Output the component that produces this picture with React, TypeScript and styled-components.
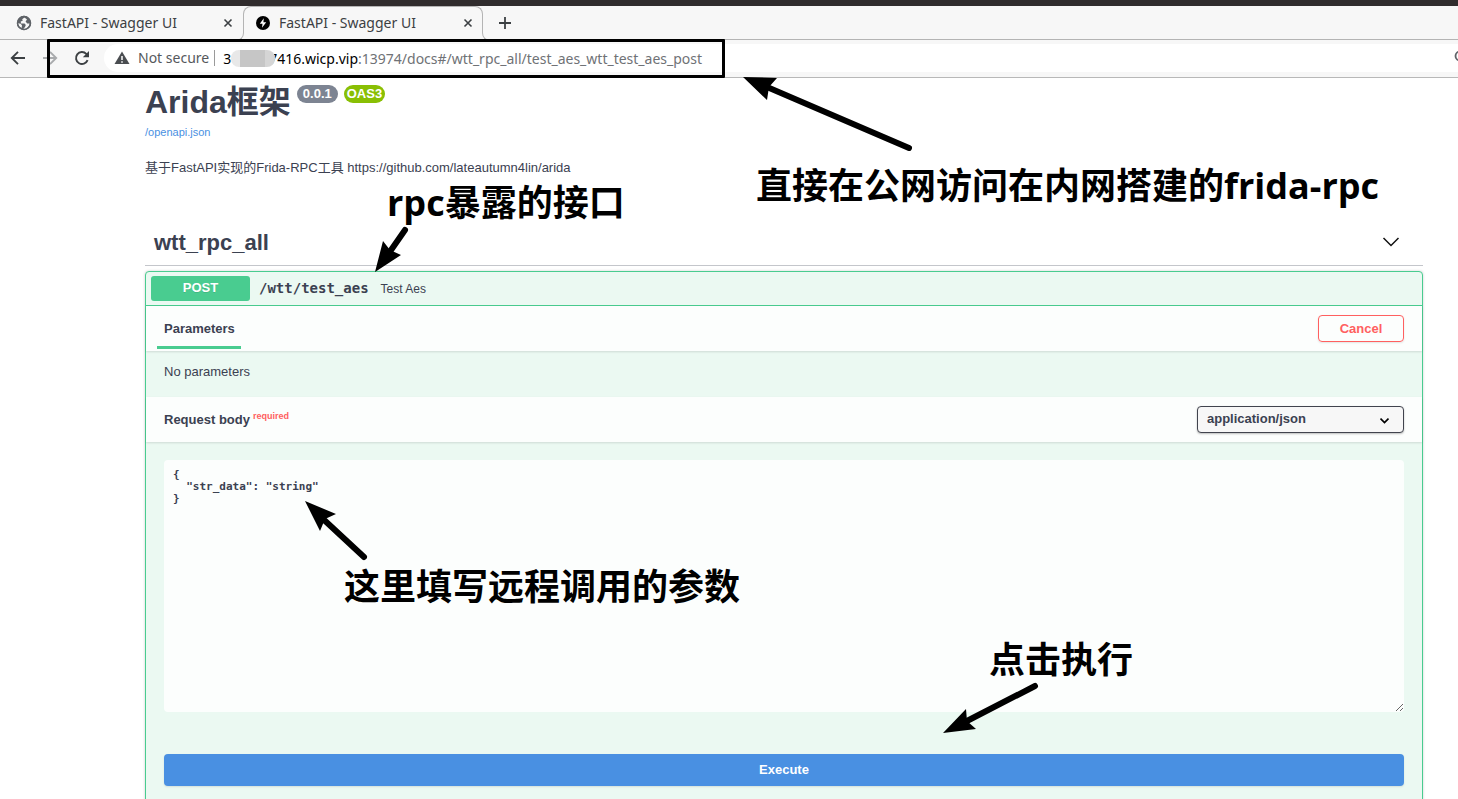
import React from 'react';
import styled, { createGlobalStyle } from 'styled-components';

const Global = createGlobalStyle`
  * { box-sizing: border-box; }
  body {
    margin: 0;
    background: #fff;
    color: #3b4151;
    font-family: "Liberation Sans", "Noto Sans CJK SC", sans-serif;
    overflow: hidden;
  }
  button, select, textarea { font: inherit; color: inherit; }
`;

const Screen = styled.div`
  position: relative;
  height: 100vh;
  overflow: hidden;
`;

/* Browser chrome */
const Chrome = styled.header`
  font-family: "Noto Sans", sans-serif;
  font-size: 14px;
  color: #3c4043;
  background: #f7f7f7;
`;

const TitleStrip = styled.div`
  height: 6px;
  background: #302c2d;
`;

const TabBar = styled.nav`
  display: flex;
  height: 34px;
  border-bottom: 1px solid #b4b4b4;
`;

const Tab = styled.div<{ $active?: boolean }>`
  position: relative;
  display: flex;
  align-items: center;
  gap: 8px;
  width: ${p => (p.$active ? 240 : 243)}px;
  height: 33px;
  padding: 0 7px 0 ${p => (p.$active ? 12 : 16)}px;
`;

/* Rounded top of the selected tab, with its two feet curving outwards */
const TabOutline = styled.span`
  position: absolute;
  inset: 0 0 8px;
  border: 1px solid #b4b4b4;
  border-bottom: 0;
  border-radius: 8px 8px 0 0;

  &::before, &::after {
    content: "";
    position: absolute;
    top: 100%;
    width: 9px;
    height: 9px;
    border: 0 solid #b4b4b4;
    border-bottom-width: 1px;
  }
  &::before {
    right: 100%;
    margin-right: -1px;
    right: calc(100% + 1px);
    border-right-width: 1px;
    border-bottom-right-radius: 8px;
  }
  &::after {
    left: 100%;
    border-left-width: 1px;
    border-bottom-left-radius: 8px;
  }
`;

const TabLabel = styled.span`
  flex: 1;
  white-space: nowrap;
`;

const IconButton = styled.button`
  display: grid;
  place-items: center;
  width: 16px;
  height: 16px;
  padding: 0;
  border: 0;
  background: none;
`;

const NewTab = styled(IconButton)`
  align-self: center;
  margin-left: 14px;
`;

const Toolbar = styled.div`
  display: flex;
  align-items: center;
  gap: 16px;
  height: 38px;
  padding: 0 0 1px 10px;
  border-bottom: 1px solid #b8b8b8;
`;

const Address = styled.div`
  display: flex;
  flex: 1;
  align-items: center;
  height: 28px;
  margin: 0 -20px 0 -2px;
  padding: 0 8px 0 10px;
  border-radius: 14px;
  background: #fff;
`;

const Warning = styled.span`
  display: flex;
  align-items: center;
  gap: 8px;
  padding-right: 5px;
  border-right: 1px solid #9a9a9a;
  line-height: 16px;
  color: #55585c;
`;

const Url = styled.span`
  display: flex;
  flex: 1;
  align-items: center;
  padding-left: 8px;
  color: #6f7276;
  b { font-weight: 400; color: #000; }
`;

const Redacted = styled.span`
  position: relative;
  width: 44px;
  height: 17px;
  margin-right: -6px;
  border-radius: 8px;
  background: linear-gradient(90deg, #e8e8e8 0 9px, #c6c6c6 9px 34px, #d5d5d5 34px);
`;

/* API page */
const Page = styled.main`
  padding: 0 35px 0 145px;
  font-size: 13px;
`;

const Info = styled.section`
  padding-top: 5px;
`;

const Title = styled.h1`
  display: flex;
  align-items: flex-start;
  gap: 6px;
  margin: 0;
  font-size: 32px;
  line-height: 38px;
`;

const Badge = styled.span<{ $color: string; $pad: number }>`
  margin-top: 2px;
  padding: 0 ${p => p.$pad}px;
  border-radius: 9px;
  background: ${p => p.$color};
  color: #fff;
  font-size: 13px;
  line-height: 18px;
`;

const SpecLink = styled.a`
  display: block;
  margin-top: 4px;
  color: #4990e2;
  font-size: 11px;
  line-height: 14px;
  text-decoration: none;
`;

const Description = styled.p`
  margin: 20px 0 0;
  line-height: 18px;
`;

const TagHeader = styled.h2`
  display: flex;
  align-items: center;
  justify-content: space-between;
  height: 48px;
  margin: 41px 0 5px;
  padding: 2px 23px 0 9px;
  border-bottom: 1px solid #c4c6cb;
  font-size: 22px;
`;

const Operation = styled.section`
  height: 600px;
  border: 1px solid #49cc90;
  border-radius: 4px;
  background: #ebf9f2;
  box-shadow: 0 0 3px rgba(0, 0, 0, 0.19);
`;

const Summary = styled.div`
  display: flex;
  align-items: center;
  height: 34px;
  padding: 0 5px;
  border-bottom: 1px solid #49cc90;
`;

const Method = styled.button`
  width: 99px;
  height: 25px;
  padding: 0 0 2px;
  border: 0;
  border-radius: 3px;
  background: #49cc90;
  color: #fff;
  font-weight: 700;
  text-shadow: 0 1px 0 rgba(0, 0, 0, 0.1);
`;

const Path = styled.code`
  padding: 0 12px 2px 9px;
  font-family: "DejaVu Sans Mono", monospace;
  font-size: 14px;
  font-weight: 700;
`;

const Small = styled.span`
  font-size: 12px;
`;

const SectionHeader = styled.div`
  display: flex;
  align-items: center;
  justify-content: space-between;
  height: 45px;
  padding: 0 18px;
  background: rgba(255, 255, 255, 0.85);
  box-shadow: 0 1px 2px rgba(0, 0, 0, 0.12);
  font-weight: 700;
`;

const SectionTab = styled.h4`
  align-self: flex-end;
  height: 38px;
  margin: 0 0 2px -7px;
  padding: 8px 6px 0 7px;
  border-bottom: 3px solid #49cc90;
  font-size: 13px;
  line-height: 20px;
`;

const Outlined = styled.button`
  width: 86px;
  height: 27px;
  padding: 0;
  border: 1px solid #ff6060;
  border-radius: 4px;
  background: transparent;
  box-shadow: 0 1px 2px rgba(0, 0, 0, 0.1);
  color: #ff6060;
  font-weight: 700;
`;

const Empty = styled.p`
  height: 46px;
  margin: 0;
  padding: 11px 18px;
  line-height: 20px;
`;

const BodyLabel = styled.label`
  display: flex;
  gap: 3px;
  line-height: 20px;
`;

const Required = styled.sup`
  color: #ff6060;
  font-size: 9px;
  line-height: 12px;
`;

const SelectWrap = styled.div`
  position: relative;
  width: 207px;
  svg { position: absolute; right: 15px; top: 11px; pointer-events: none; }
`;

const Select = styled.select`
  display: block;
  width: 100%;
  height: 27px;
  padding: 0 9px 2px;
  appearance: none;
  border: 1px solid #41444e;
  border-radius: 4px;
  background: #f7f7f7;
  box-shadow: 0 1px 2px rgba(0, 0, 0, 0.25);
  font-weight: 700;
`;

const Editor = styled.div`
  display: flex;
  flex-direction: column;
  gap: 42px;
  padding: 18px;
`;

const Payload = styled.textarea`
  display: block;
  width: 100%;
  height: 252px;
  padding: 9px;
  border: 0;
  border-radius: 4px;
  outline: 0;
  background: rgba(255, 255, 255, 0.85);
  font-family: "DejaVu Sans Mono", monospace;
  font-size: 11px;
  font-weight: 700;
  line-height: 12px;
`;

const Execute = styled.button`
  height: 32px;
  padding: 0 0 2px;
  border: 0;
  border-radius: 4px;
  background: #4990e2;
  box-shadow: 0 1px 2px rgba(0, 0, 0, 0.1);
  color: #fff;
  font-weight: 700;
`;

/* Hand-placed notes on top of the screen */
const Frame = styled.div`
  position: absolute;
  left: 47px;
  top: 39px;
  width: 678px;
  height: 39px;
  border: 3px solid #000;
  border-radius: 1px;
  pointer-events: none;
`;

const Arrows = styled.svg`
  position: absolute;
  left: 0;
  top: 0;
  pointer-events: none;
`;

const Note = styled.p<{ $x: number; $y: number }>`
  position: absolute;
  left: ${p => p.$x}px;
  top: ${p => p.$y}px;
  margin: 0;
  color: #000;
  font: 700 36px/44px "Open Sans", "Noto Sans CJK SC", sans-serif;
  white-space: nowrap;
  pointer-events: none;
`;

const CloseIcon = () => (
  <svg width="10" height="10" viewBox="0 0 10 10" stroke="#3c4043" strokeWidth="1.6">
    <path d="M1.500 1.500l7 7M8.500 1.500l-7 7" />
  </svg>
);

const arrows = [
  { line: 'M909 148L767 87', head: '743,77 777,78 769,87 767,100' },
  { line: 'M405 230L389 253', head: '375,272 383,241 390,250 401,255' },
  { line: 'M364 557L322 518', head: '305,501 336,514 325,519 320,531' },
  { line: 'M1035 686L965 722', head: '943,733 966,709 967,721 976,729' },
];

export default function App() {
  return (
    <Screen>
      <Global />
      <Chrome>
        <TitleStrip />
        <TabBar>
          <Tab>
            <svg width="16" height="16" viewBox="0 0 16 16">
              <circle cx="8" cy="8" r="7.2" fill="#5f6368" />
              <path d="M8.500 2.400L6.200 4.200l.5 1.600-2 .8.300 1.800 3.600.2 1.200 1.400-.8 2-2.200 2.400 3.400-.4 3-3.400.4-2.200-2.400.2-1.600-2.200 1.400-1.800z" fill="#f7f7f7" />
              <path d="M1.800 8.200l3 .6 1.200 1.800-.4 2.400-2.400-1.600z" fill="#f7f7f7" />
              <circle cx="8" cy="8" r="6.500" fill="none" stroke="#5f6368" strokeWidth="1.400" />
            </svg>
            <TabLabel>FastAPI - Swagger UI</TabLabel>
            <IconButton aria-label="Close tab"><CloseIcon /></IconButton>
          </Tab>
          <Tab $active>
            <TabOutline />
            <svg width="16" height="16" viewBox="0 0 16 16">
              <circle cx="8" cy="8" r="7" fill="#000" />
              <path d="M8.800 3.200L4.800 8.800h2.700L7 12.800l4.200-5.600H8.400z" fill="#fff" />
            </svg>
            <TabLabel>FastAPI - Swagger UI</TabLabel>
            <IconButton aria-label="Close tab"><CloseIcon /></IconButton>
          </Tab>
          <NewTab aria-label="New tab">
            <svg width="12" height="12" viewBox="0 0 12 12" stroke="#3c4043" strokeWidth="1.800">
              <path d="M6 0v12M0 6h12" />
            </svg>
          </NewTab>
        </TabBar>
        <Toolbar>
          <IconButton aria-label="Back">
            <svg width="16" height="16" viewBox="0 0 16 16" fill="none" stroke="#3c4043" strokeWidth="1.900">
              <path d="M15 8H2.500M8 1.800L1.800 8 8 14.200" />
            </svg>
          </IconButton>
          <IconButton aria-label="Forward">
            <svg width="16" height="16" viewBox="0 0 16 16" fill="none" stroke="#a9abad" strokeWidth="1.900">
              <path d="M1 8h12.500M8 1.800L14.200 8 8 14.200" />
            </svg>
          </IconButton>
          <IconButton aria-label="Reload">
            <svg width="16" height="16" viewBox="0 0 16 16">
              <path d="M13.600 10.200A6 6 0 1 1 12.300 3.800L14 5.500" fill="none" stroke="#3c4043" strokeWidth="1.900" />
              <path d="M15 1v6.200H8.800z" fill="#3c4043" />
            </svg>
          </IconButton>
          <Address>
            <Warning>
              <svg width="16" height="16" viewBox="0 0 16 16">
                <path d="M8 1.500L15.500 14H.5z" fill="#4a4d51" />
                <path d="M8 6v4M8 11.200v1.600" stroke="#fff" strokeWidth="1.500" />
              </svg>
              Not secure
            </Warning>
            <Url>
              <b>3</b><Redacted /><b>7416.wicp.vip</b>:13974/docs#/wtt_rpc_all/test_aes_wtt_test_aes_post
            </Url>
            <svg width="16" height="16" viewBox="0 0 16 16" fill="none" stroke="#5f6368" strokeWidth="1.800">
              <circle cx="6" cy="6" r="4.500" /><path d="M9.500 9.500L14 14" />
            </svg>
          </Address>
        </Toolbar>
      </Chrome>

      <Page>
        <Info>
          <Title>
            Arida框架
            <Badge $color="#7d8492" $pad={6}>0.0.1</Badge>
            <Badge $color="#89bf04" $pad={3}>OAS3</Badge>
          </Title>
          <SpecLink href="#openapi">/openapi.json</SpecLink>
          <Description>基于FastAPI实现的Frida-RPC工具 https://github.com/lateautumn4lin/arida</Description>
        </Info>

        <TagHeader>
          wtt_rpc_all
          <svg width="18" height="18" viewBox="0 0 18 18" fill="none" stroke="#111" strokeWidth="1.500">
            <path d="M1.500 4L9 11.500 16.500 4" />
          </svg>
        </TagHeader>

        <Operation>
          <Summary>
            <Method>POST</Method>
            <Path>/wtt/test_aes</Path>
            <Small>Test Aes</Small>
          </Summary>
          <SectionHeader>
            <SectionTab>Parameters</SectionTab>
            <Outlined>Cancel</Outlined>
          </SectionHeader>
          <Empty>No parameters</Empty>
          <SectionHeader>
            <BodyLabel htmlFor="payload">Request body <Required>required</Required></BodyLabel>
            <SelectWrap>
              <Select aria-label="Content type"><option>application/json</option></Select>
              <svg width="9" height="7" viewBox="0 0 9 7" fill="none" stroke="#000" strokeWidth="1.700">
                <path d="M.5 1.500l4 4 4-4" />
              </svg>
            </SelectWrap>
          </SectionHeader>
          <Editor>
            <Payload id="payload" spellCheck={false} defaultValue={'{\n  "str_data": "string"\n}'} />
            <Execute>Execute</Execute>
          </Editor>
        </Operation>
      </Page>

      <Frame />
      <Arrows width="1100" height="760" viewBox="0 0 1100 760">
        {arrows.map(a => (
          <g key={a.head}>
            <path d={a.line} stroke="#000" strokeWidth="6" strokeLinecap="round" />
            <polygon points={a.head} />
          </g>
        ))}
      </Arrows>
      <Note $x={756} $y={164}>直接在公网访问在内网搭建的frida-rpc</Note>
      <Note $x={387} $y={181}>rpc暴露的接口</Note>
      <Note $x={344} $y={565}>这里填写远程调用的参数</Note>
      <Note $x={989} $y={638}>点击执行</Note>
    </Screen>
  );
}
